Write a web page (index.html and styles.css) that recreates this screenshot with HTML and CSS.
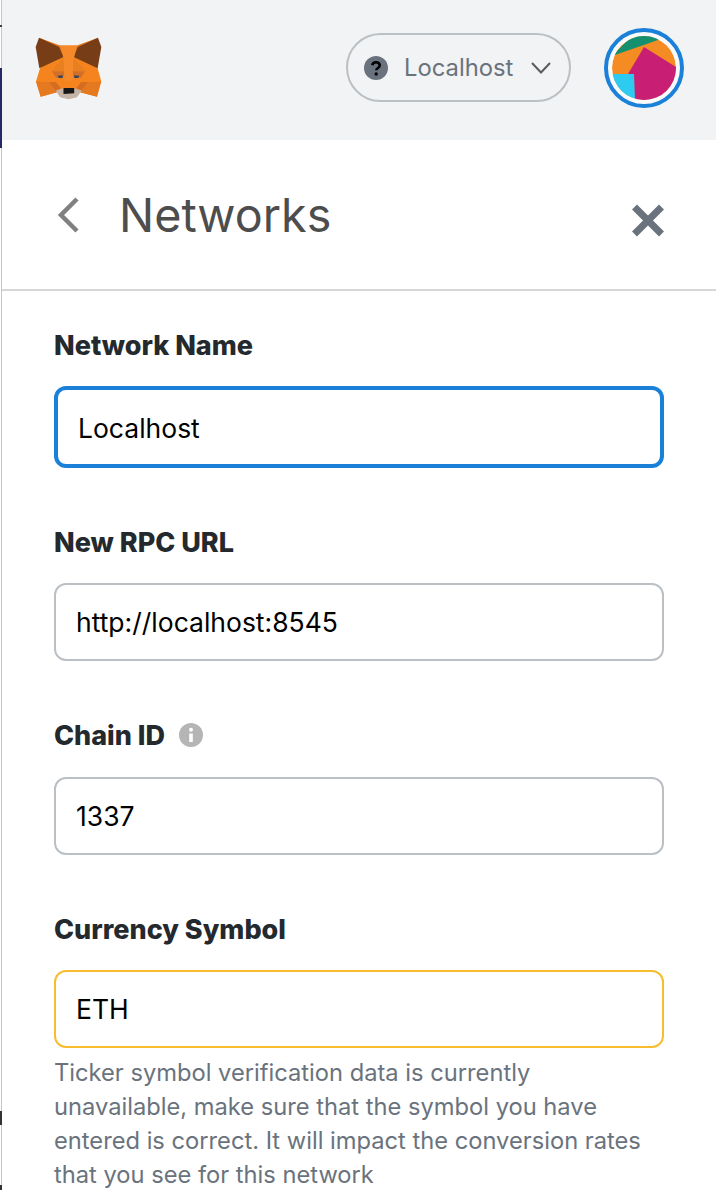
FILE: index.html
```html
<!DOCTYPE html>
<html lang="en">
<head>
<meta charset="utf-8">
<title>Networks</title>
<link rel="stylesheet" href="styles.css">
</head>
<body>
<div class="page">
  <div class="edge">
    <div class="gap-25"></div>
    <div class="mark-dark"></div>
    <div class="gap-41"></div>
    <div class="mark-navy"></div>
    <div class="gap-963"></div>
    <div class="mark-glyph"></div>
    <div class="gap-60"></div>
    <div class="mark-end"></div>
  </div>
  <div class="main">
    <header class="topbar">
      <svg class="fox" viewBox="105 110 200 188" aria-hidden="true">
        <polygon fill="#f5841f" points="180,135 230,135 292,203 303,243 290,288 240,275 170,275 122,288 108,243 120,203"/>
        <polygon fill="#e2761b" points="117,112 180,135 190,170"/>
        <polygon fill="#e2761b" points="293,112 230,135 220,170"/>
        <polygon fill="#763d16" points="117,112 177,140 190,170 118,203 107,140"/>
        <polygon fill="#763d16" points="293,112 233,140 220,170 292,203 303,140"/>
        <polygon fill="#f68a2a" points="180,135 230,135 222,170 218,240 192,240 190,170"/>
        <polygon fill="#e8801f" points="190,172 153,212 192,212"/>
        <polygon fill="#e8801f" points="220,172 257,212 218,212"/>
        <polygon fill="#d2702a" points="155,212 192,212 192,226 168,232"/>
        <polygon fill="#d2702a" points="255,212 218,212 218,226 242,232"/>
        <polygon fill="#e4791f" points="108,243 146,245 170,275 122,288"/>
        <polygon fill="#e4791f" points="302,243 264,245 240,275 290,288"/>
        <polygon fill="#d56c22" points="146,245 167,244 182,262 170,275"/>
        <polygon fill="#d56c22" points="264,245 243,244 228,262 240,275"/>
        <polygon fill="#c4b3a6" points="167,270 190,262 220,262 245,270 230,290 205,296 180,290"/>
        <polygon fill="#161616" points="190,262 222,262 222,278 190,280"/>
        <polygon fill="#3a4458" points="172,226 188,224 188,232 176,232"/>
        <polygon fill="#3a4458" points="238,226 222,224 222,232 234,232"/>
      </svg>
      <div class="topbar-right">
        <div class="net-pill">
          <svg class="q-icon" viewBox="0 0 24 24" aria-hidden="true">
            <circle cx="12" cy="12" r="12" fill="#6a737d"/>
            <path d="M8.300 9.300a3.800 3.600 0 0 1 7.500 0c0 2.700-3.600 2.600-3.600 5" fill="none" stroke="#000" stroke-width="2.600"/>
            <circle cx="12.200" cy="18" r="1.700" fill="#000"/>
          </svg>
          <span class="net-name">Localhost</span>
          <svg class="chev" viewBox="0 0 20 12" aria-hidden="true"><path d="M1 1l9 9.500L19 1" fill="none" stroke="#5b5b5b" stroke-width="2"/></svg>
        </div>
        <div class="avatar">
          <svg class="blockie" viewBox="0 0 64 64" aria-hidden="true">
            <circle cx="32" cy="32" r="32" fill="#f48c23"/>
            <polygon fill="#14906f" points="0,20 20,0 50,0 46,4"/>
            <polygon fill="#c81f75" points="32,11 64,31 64,64 23,64 16,38"/>
            <polygon fill="#2ecbf0" points="0,38 22,38 23,64 0,64"/>
          </svg>
        </div>
      </div>
    </header>
    <section class="panel">
      <div class="panel-head">
        <svg class="back" viewBox="0 0 24 36" aria-hidden="true"><path d="M21 2L5 18l16 16" fill="none" stroke="#808080" stroke-width="4.500"/></svg>
        <h1 class="title">Networks</h1>
        <svg class="close" viewBox="0 0 32 33" aria-hidden="true"><path d="M2.500 3l27 27M29.500 3l-27 27" fill="none" stroke="#6a737d" stroke-width="7"/></svg>
      </div>
      <form class="form">
        <div class="group first">
          <div class="label">Network Name</div>
          <div class="input input-focus">Localhost</div>
        </div>
        <div class="group rest">
          <div class="label">New RPC URL</div>
          <div class="input">http://localhost:8545</div>
        </div>
        <div class="group rest">
          <div class="label label-row">Chain ID
            <svg class="info" viewBox="0 0 24 24" aria-hidden="true">
              <circle cx="12" cy="12" r="12" fill="#b5b5b5"/>
              <circle cx="12" cy="6.800" r="2" fill="#fff"/>
              <rect x="10.200" y="10.500" width="3.600" height="8.500" fill="#fff"/>
            </svg>
          </div>
          <div class="input">1337</div>
        </div>
        <div class="group rest">
          <div class="label">Currency Symbol</div>
          <div class="input input-warn">ETH</div>
          <p class="help">Ticker symbol verification data is currently unavailable, make sure that the symbol you have entered is correct. It will impact the conversion rates that you see for this network</p>
        </div>
      </form>
    </section>
  </div>
</div>
</body>
</html>
```
FILE: styles.css
```css
* { box-sizing: border-box; }
html, body { margin: 0; padding: 0; height: 100%; overflow: hidden; background: #fff; }
body { font-family: Inter, "Liberation Sans", sans-serif; }
.page { display: flex; width: 716px; height: 1190px; overflow: hidden; }

.edge {
  width: 2px;
  flex: none;
  display: flex;
  flex-direction: column;
  background: linear-gradient(to right, #fff 1px, #c6c6c6 1px);
}
.gap-25 { height: 25px; }
.gap-41 { height: 41px; }
.gap-963 { height: 963px; }
.gap-60 { height: 60px; }
.mark-dark { height: 2px; background: #3d3d3d; }
.mark-navy { height: 80px; background: #252a63; }
.mark-glyph { height: 14px; background: #333; }
.mark-end { height: 5px; background: #333; }

.main { flex: 1; min-width: 0; }

.topbar {
  height: 140px;
  background: #f2f3f4;
  display: flex;
  align-items: flex-start;
  justify-content: space-between;
  padding: 28px 32px 0 33px;
}
.fox { width: 67px; height: 63px; margin-top: 9px; }
.topbar-right { display: flex; align-items: flex-start; gap: 33px; }

.net-pill {
  width: 225px;
  height: 69px;
  margin-top: 5px;
  border: 2px solid #bbc0c5;
  border-radius: 35px;
  display: flex;
  align-items: center;
  padding-left: 16px;
}
.q-icon { width: 24px; height: 24px; flex: none; }
.net-name { margin-left: 16px; font-size: 23.8px; color: #6a737d; }
.chev { width: 20px; height: 12px; margin-left: 18px; flex: none; }

.avatar {
  width: 80px;
  height: 80px;
  border: 4px solid #1a80d8;
  border-radius: 50%;
  padding: 4px;
  background: #fafafa;
}
.blockie { display: block; width: 64px; height: 64px; border-radius: 50%; }

.panel { background: #fff; }
.panel-head {
  height: 151px;
  border-bottom: 2px solid #d6d6d6;
  display: flex;
  align-items: flex-start;
  position: relative;
  padding: 0 0 0 54px;
}
.back { width: 24px; height: 36px; margin-top: 57px; flex: none; }
.title {
  margin: 44px 0 0 39px;
  font-size: 46.7px;
  line-height: 62px;
  font-weight: 400;
  color: #4d4d4d;
}
.close { position: absolute; left: 630px; top: 64px; width: 32px; height: 33px; }

.form { padding: 0 52px; }
.group { display: flex; flex-direction: column; }
.first { padding-top: 37px; }
.rest { padding-top: 57px; }

.label {
  height: 36px;
  font-size: 27px;
  line-height: 36px;
  font-weight: 800;
  color: #24292e;
}
.label-row { display: flex; align-items: center; gap: 14px; margin-bottom: 1px; }
.info { width: 24px; height: 24px; flex: none; margin-top: -2px; }

.input {
  height: 78px;
  margin-top: 22px;
  border: 2px solid #bbc0c5;
  border-radius: 12px;
  padding: 0 20px;
  display: flex;
  align-items: center;
  font-size: 26.5px;
  color: #000;
}
.input-focus {
  height: 82px;
  border: 4px solid #1a80d8;
  padding-top: 2px;
}
.input-warn { border-color: #f7bd2f; }

.help {
  margin: 8px 0 0;
  font-size: 23.7px;
  line-height: 34px;
  color: #6a737d;
}
```
